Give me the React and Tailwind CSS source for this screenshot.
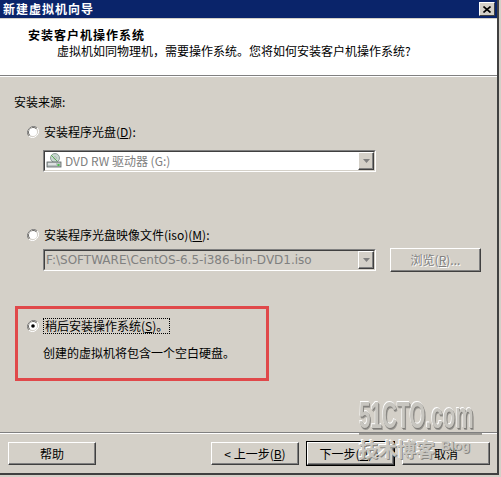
import React from "react";

const F = { fontFamily: '"Noto Sans CJK SC", "Liberation Sans", sans-serif' };

function Radio({ checked }) {
  return (
    <svg width="12" height="12" viewBox="0 0 12 12" className="shrink-0">
      <path d="M10.2 1.8 A6 6 0 0 0 1.8 10.2" fill="none" stroke="#808080" strokeWidth="1" />
      <path d="M9.4 2.6 A4.9 4.9 0 0 0 2.6 9.4" fill="none" stroke="#404040" strokeWidth="1" />
      <path d="M1.8 10.2 A6 6 0 0 0 10.2 1.8" fill="none" stroke="#ffffff" strokeWidth="1" />
      <path d="M2.6 9.4 A4.9 4.9 0 0 0 9.4 2.6" fill="none" stroke="#d4d0c8" strokeWidth="1" />
      <circle cx="6" cy="6" r="4" fill="#ffffff" />
      {checked && <circle cx="6" cy="6" r="1.8" fill="#000" />}
    </svg>
  );
}

function DropBtn() {
  return (
    <div className="w-[16px] h-[18px] bg-[#d4d0c8] border border-t-white border-l-white border-r-[#404040] border-b-[#404040] flex items-center justify-center shadow-[inset_-1px_-1px_0_#808080]">
      <svg width="7" height="4" viewBox="0 0 7 4">
        <path d="M0 0 H7 L3.5 4 Z" fill="#808080" />
      </svg>
    </div>
  );
}

function DvdIcon() {
  return (
    <svg width="16" height="16" viewBox="0 0 16 16" className="shrink-0">
      <circle cx="9" cy="5" r="4.5" fill="#c8d8d0" stroke="#7a8a86" strokeWidth="0.8" />
      <circle cx="9" cy="5" r="1.2" fill="#fff" stroke="#7a8a86" strokeWidth="0.6" />
      <path d="M5 2 L11 8" stroke="#5fb05a" strokeWidth="1" />
      <rect x="1" y="9" width="14" height="5" fill="#b8c0c0" stroke="#5a6262" strokeWidth="0.8" />
      <rect x="2" y="10.5" width="8" height="1" fill="#ffffff" />
      <rect x="11.5" y="11" width="2" height="2" fill="#4bbf4b" />
    </svg>
  );
}

function Btn({ children, def, disabled, className = "" }) {
  const inner = (
    <div
      className={
        "h-full w-full bg-[#d4d0c8] border border-t-white border-l-white border-r-[#404040] border-b-[#404040] shadow-[inset_-1px_-1px_0_#808080] flex items-center justify-center text-[12px] " +
        (disabled ? "text-[#808080] [text-shadow:1px_1px_0_#ffffff]" : "text-black")
      }
    >
      {children}
    </div>
  );
  if (def)
    return <div className={"border border-black " + className}>{inner}</div>;
  return <div className={className}>{inner}</div>;
}

export default function App() {
  return (
    <div className="w-[501px] h-[477px] bg-[#d4d0c8] overflow-hidden relative" style={F}>
      <div className="w-[499px] h-[475px] border-r-2 border-b-2 border-[#404040] flex flex-col">
        {/* title bar */}
        <div className="h-[18px] bg-[#0a246a] flex items-center justify-between pl-[3px] pr-[2px] shrink-0">
          <span className="text-white font-bold text-[12px] tracking-[1px] leading-none">新建虚拟机向导</span>
          <div className="w-[16px] h-[14px] bg-[#d4d0c8] border border-t-white border-l-white border-r-[#404040] border-b-[#404040] flex items-center justify-center">
            <svg width="8" height="7" viewBox="0 0 8 7">
              <path d="M0.5 0.5 L7.5 6.5 M7.5 0.5 L0.5 6.5" stroke="#000" strokeWidth="1.6" />
            </svg>
          </div>
        </div>
        <div className="h-[1px] bg-[#d4d0c8] shrink-0" />
        {/* header */}
        <div className="h-[57px] bg-white border-b border-[#808080] shrink-0 flex flex-col">
          <div className="mt-[8px] ml-[28px] text-[12px] font-bold tracking-[1px] leading-[16px] text-black">安装客户机操作系统</div>
          <div className="mt-[0px] ml-[57px] text-[12px] leading-[16px] text-black">虚拟机如同物理机，需要操作系统。您将如何安装客户机操作系统?</div>
        </div>
        <div className="h-[1px] bg-white shrink-0" />

        {/* body */}
        <div className="flex flex-col flex-1 text-[12px] text-black">
          <div className="mt-[18px] ml-[14px] h-[14px] leading-[14px]">安装来源:</div>

          <div className="mt-[16px] ml-[27px] h-[14px] flex items-center gap-[5px] leading-[14px]">
            <Radio />
            <span>安装程序光盘(<u>D</u>):</span>
          </div>

          <div className="mt-[11px] ml-[43px] w-[333px] h-[22px] border border-t-[#808080] border-l-[#808080] border-b-white border-r-white">
            <div className="h-full w-full border border-t-[#404040] border-l-[#404040] border-b-[#d4d0c8] border-r-[#d4d0c8] bg-white flex items-center pl-[1px] pr-[0px]">
              <DvdIcon />
              <span className="ml-[3px] flex-1 text-[#808080] leading-[14px]">DVD RW 驱动器 (G:)</span>
              <DropBtn />
            </div>
          </div>

          <div className="mt-[56px] ml-[27px] h-[14px] flex items-center gap-[5px] leading-[14px]">
            <Radio />
            <span>安装程序光盘映像文件(iso)(<u>M</u>):</span>
          </div>

          <div className="mt-[6px] ml-[43px] h-[24px] flex items-center">
            <div className="w-[333px] h-[22px] border border-t-[#808080] border-l-[#808080] border-b-white border-r-white">
              <div className="h-full w-full border border-t-[#404040] border-l-[#404040] border-b-[#d4d0c8] border-r-[#d4d0c8] bg-[#d4d0c8] flex items-center pl-[1px]">
                <span className="flex-1 text-[#808080] leading-[14px]" style={{ fontFamily: '"DejaVu Sans", "Noto Sans CJK SC", sans-serif', fontSize: "12px" }}>
                  F:\SOFTWARE\CentOS-6.5-i386-bin-DVD1.iso
                </span>
                <DropBtn />
              </div>
            </div>
            <Btn disabled className="ml-[14px] w-[91px] h-[24px]">
              <span>浏览(<u>R</u>)...</span>
            </Btn>
          </div>

          <div className="mt-[34px] ml-[15px] w-[254px] h-[75px] border-[3px] border-[#e0484a] flex flex-col">
            <div className="mt-[9px] ml-[9px] h-[16px] flex items-center gap-[4px]">
              <Radio checked />
              <span className="border border-dotted border-black px-[1px] leading-[14px]">稍后安装操作系统(<u>S</u>)。</span>
            </div>
            <div className="mt-[12px] ml-[25px] leading-[14px]">创建的虚拟机将包含一个空白硬盘。</div>
          </div>

          <div className="flex-1" />
          <div className="h-[1px] bg-[#808080]" />
          <div className="h-[1px] bg-white" />

          <div className="mt-[7px] mb-[7px] ml-[8px] mr-[7px] flex items-center h-[25px]">
            <Btn className="w-[88px] h-[23px]">帮助</Btn>
            <div className="flex-1" />
            <Btn className="w-[88px] h-[23px]">&lt; 上一步(<u>B</u>)</Btn>
            <Btn def className="ml-[7px] w-[89px] h-[25px]">下一步(<u>N</u>) &gt;</Btn>
            <Btn className="ml-[7px] w-[88px] h-[23px]">取消</Btn>
          </div>
        </div>
      </div>

      {/* watermark overlay */}
      <div className="absolute left-[359px] top-[400px] w-[126px] pointer-events-none select-none">
        <div className="w-[126px] h-[32px] overflow-hidden">
          <div
            className="whitespace-nowrap text-[37px] font-bold leading-[32px] text-[#c8c6c0] origin-left scale-x-[0.56] [text-shadow:1px_1px_0_#7e7c78,2px_2px_0_#9a9893,-1px_-1px_0_#ffffff]"
            style={{ fontFamily: '"Liberation Sans", sans-serif' }}
          >
            51CTO.com
          </div>
        </div>
        <div className="w-[123px] h-[2px] bg-[#9a9893] mt-[1px]" />
        <div className="flex items-start mt-[4px]">
          <span className="text-[19px] font-bold leading-none text-[#c8c6c0] [text-shadow:1px_1px_0_#8a8883,-1px_-1px_0_#ffffff]">技术博客</span>
          <span className="ml-[6px] text-[13px] font-bold leading-none text-[#c8c6c0] [text-shadow:1px_1px_0_#8a8883]" style={{ fontFamily: '"Liberation Sans", sans-serif' }}>Blog</span>
        </div>
      </div>
    </div>
  );
}
